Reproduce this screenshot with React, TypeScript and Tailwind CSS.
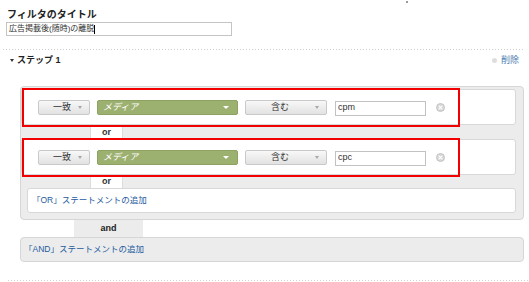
import React from 'react';

const GrayArrow = () => (
  <span className="inline-block w-0 h-0 border-l-[2.5px] border-r-[2.5px] border-t-[3px] border-l-transparent border-r-transparent border-t-[#a8a8a8]" />
);

const ClearIcon = () => (
  <svg width="9" height="9" viewBox="0 0 9 9" className="ml-[10px] shrink-0">
    <circle cx="4.5" cy="4.5" r="4" fill="#d6d6d6" stroke="#bdbdbd" strokeWidth="0.8" />
    <path d="M3 3 L6 6 M6 3 L3 6" stroke="#ffffff" strokeWidth="1.1" strokeLinecap="round" />
  </svg>
);

const ConditionRow = ({ value }: { value: string }) => (
  <div className="relative w-[495px] h-[36px] bg-white border border-[#d8d8d8] rounded-[3px] flex items-center pl-[16px]">
    {/* 一致 */}
    <div className="w-[52px] h-[15px] flex items-center justify-end pr-[7px] border border-[#c9c9c9] rounded-[2px] bg-gradient-to-b from-[#f8f8f8] to-[#e2e2e2] text-[9px] text-[#333]">
      <span className="mr-[7px] leading-none">一致</span>
      <GrayArrow />
    </div>
    {/* メディア */}
    <div className="ml-[7px] w-[141px] h-[15px] flex items-center justify-between pl-[5px] pr-[8px] border border-[#8ea262] rounded-[2px] bg-[#9cb070] text-[9px] text-white italic">
      <span className="leading-none">メディア</span>
      <span className="inline-block w-0 h-0 border-l-[3px] border-r-[3px] border-t-[3px] border-l-transparent border-r-transparent border-t-white" />
    </div>
    {/* 含む */}
    <div className="ml-[7px] w-[82px] h-[15px] flex items-center justify-end pr-[7px] border border-[#c9c9c9] rounded-[2px] bg-gradient-to-b from-[#f8f8f8] to-[#e2e2e2] text-[9px] text-[#333]">
      <span className="mr-[26px] leading-none">含む</span>
      <GrayArrow />
    </div>
    <div className="ml-[8px] mt-[2px] w-[91px] h-[15px] border border-[#c2c2c2] bg-white flex items-center pl-[2px] text-[9px] text-[#333]">
      {value}
    </div>
    <ClearIcon />
    {/* annotation */}
    <div className="absolute left-0 top-[-2px] w-[438px] h-[39px] border-2 border-[#f20000] z-10 pointer-events-none" />
  </div>
);

const OrTab = ({ tall }: { tall: boolean }) => (
  <div
    className={`ml-[69px] w-[33px] ${tall ? 'h-[14px]' : 'h-[13px]'} bg-white border-x border-[#dcdcdc] flex items-center justify-center text-[9px] font-bold text-[#333] leading-none`}
  >
    or
  </div>
);

const DottedLine = () => (
  <div className="h-px bg-[linear-gradient(to_right,#cfcfcf_1px,transparent_1px)] bg-[length:3px_1px]" />
);

export default function App() {
  return (
    <div className="relative w-[529px] h-[282px] overflow-hidden bg-white text-[#222] font-['Liberation_Sans','Noto_Sans_CJK_JP',sans-serif]">
      <div className="absolute left-[406px] top-[1px] w-[2px] h-[2px] bg-[#9a9a9a]" />

      {/* title */}
      <div className="pt-[9px] pl-[7px]">
        <div className="h-[12px] leading-[12px] text-[10px] font-bold">フィルタのタイトル</div>
        <div className="mt-[1px] ml-[-1px] w-[226px] h-[14px] border border-[#c4c4c4] flex items-center pl-[2px] text-[8px] text-[#333]">
          <span className="leading-none">広告掲載後(随時)の離脱</span>
          <span className="inline-block w-px h-[9px] bg-black" />
        </div>
      </div>

      <div className="mt-[13px] ml-[3px] mr-[4px]">
        <DottedLine />
      </div>

      {/* step header */}
      <div className="mt-[4px] h-[12px] flex items-center justify-between pl-[10px] pr-[10px]">
        <div className="flex items-center text-[9px] font-bold">
          <span className="inline-block w-0 h-0 border-l-[2.5px] border-r-[2.5px] border-t-[3px] border-l-transparent border-r-transparent border-t-[#333]" />
          <span className="ml-[3px] leading-none">ステップ 1</span>
        </div>
        <div className="flex items-center">
          <span className="w-[5px] h-[5px] rounded-full bg-[#dedede]" />
          <span className="ml-[4px] text-[9px] text-[#4a7bb0] leading-none">削除</span>
        </div>
      </div>

      {/* OR group */}
      <div className="mt-[20px] ml-[20px] w-[504px] border border-[#d6d6d6] rounded-[4px] bg-[#ececec] pt-[2px] pb-[6px]">
        <ConditionRow value="cpm" />
        <OrTab tall />
        <ConditionRow value="cpc" />
        <OrTab tall={false} />
        <div className="ml-[6px] w-[489px] h-[25px] bg-white border border-[#d8d8d8] rounded-[3px] flex items-center pl-[4px] text-[8.5px] text-[#1f5b9e]">
          「OR」ステートメントの追加
        </div>
      </div>

      {/* and */}
      <div className="ml-[74px] w-[69px] h-[17px] bg-[#ececec] flex items-center justify-center text-[9px] font-bold text-[#222] leading-none">
        and
      </div>
      <div className="ml-[20px] w-[504px] h-[25px] bg-[#ececec] border border-[#d6d6d6] rounded-[4px] flex items-center pl-[3px] text-[8.5px] text-[#1f5b9e]">
        「AND」ステートメントの追加
      </div>

      <div className="mt-[18px] ml-[8px]">
        <DottedLine />
      </div>
    </div>
  );
}
